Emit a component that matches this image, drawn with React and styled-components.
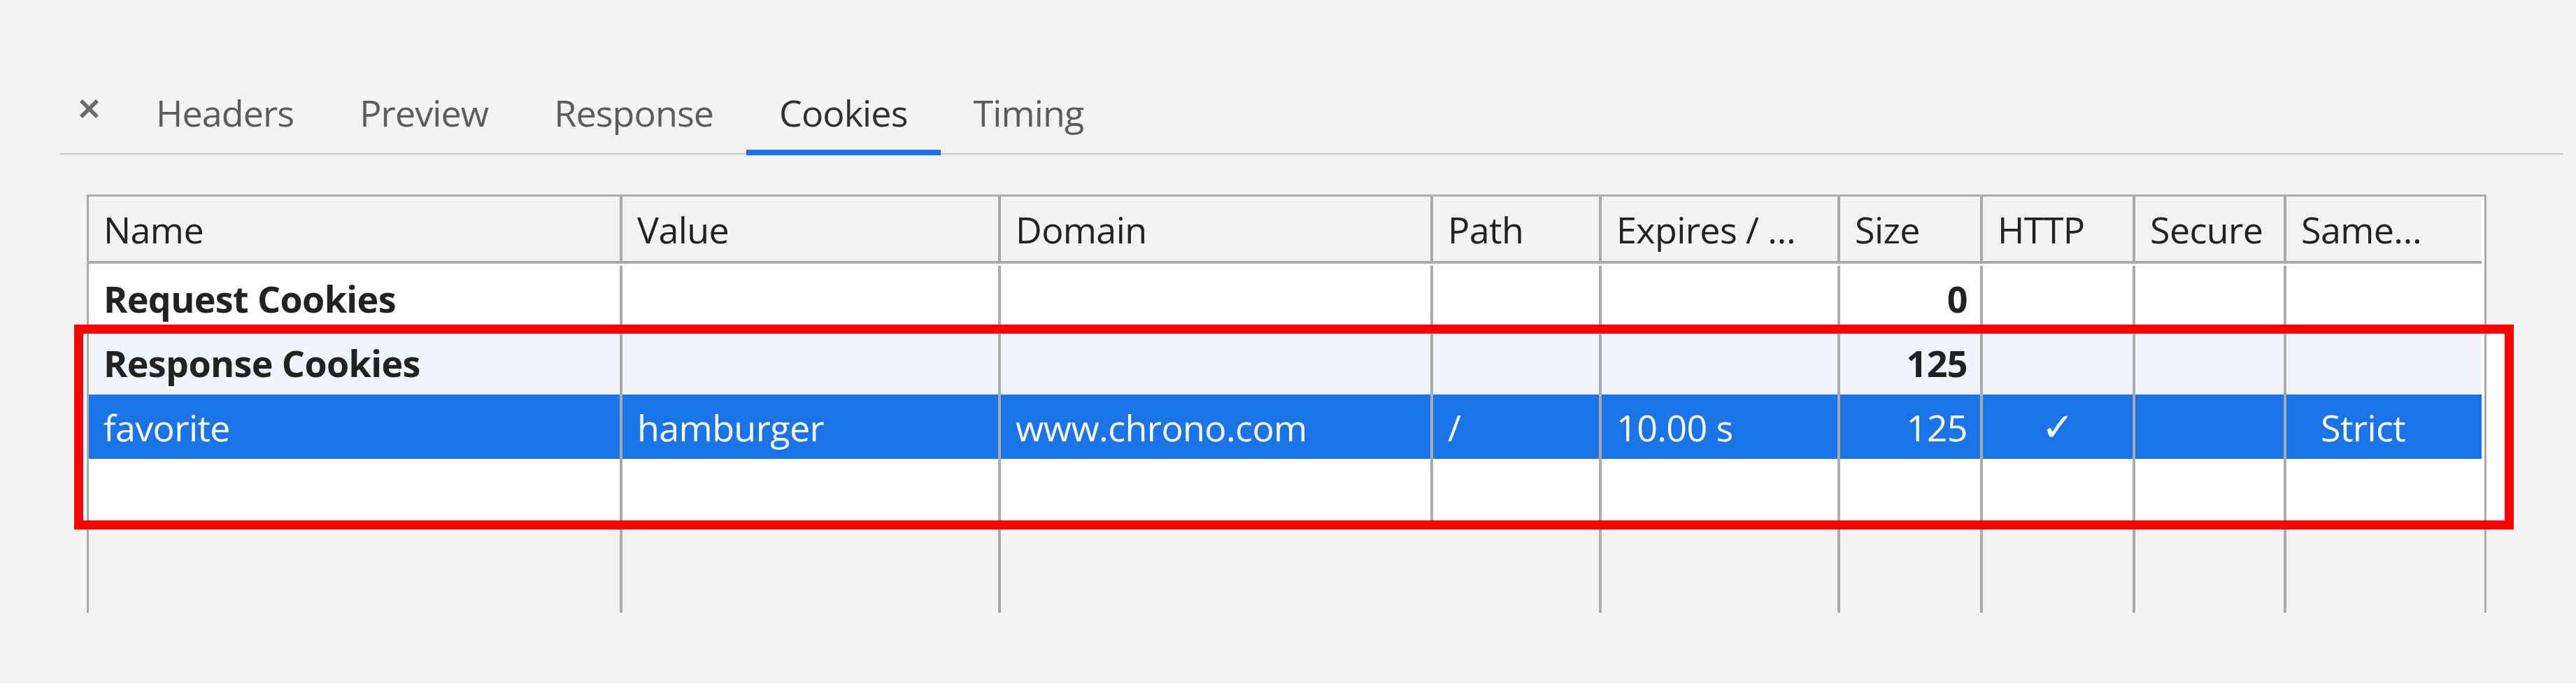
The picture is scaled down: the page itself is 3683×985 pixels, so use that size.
import React from "react";
import styled, { createGlobalStyle, css } from "styled-components";

const GlobalStyle = createGlobalStyle`
  html, body {
    margin: 0;
    padding: 0;
    background: #ffffff;
  }
  body {
    font-family: "Open Sans", "Noto Sans", sans-serif;
  }
  * { box-sizing: border-box; }
`;

const COLS = "759px 541px 618px 241px 341px 204px 218px 216px 283px";

const Page = styled.div`
  width: 100%;
  height: 977px;
  background: #f3f3f3;
  padding-top: 101px;
  overflow: hidden;
`;

const TabBar = styled.div`
  margin-left: 86px;
  width: 3579px;
  height: 120px;
  border-bottom: 2px solid #cbcbcb;
  display: flex;
  align-items: stretch;
  position: relative;
`;

const CloseButton = styled.div`
  margin-left: 26px;
  margin-right: 33px;
  width: 31px;
  align-self: center;
  height: 31px;
  margin-bottom: 10px;
  display: flex;
  align-items: center;
  justify-content: center;
`;

const Tab = styled.div`
  position: relative;
  display: flex;
  align-items: center;
  padding: 0 47px;
  font-size: 52px;
  letter-spacing: -0.9px;
  color: ${(p) => (p.$active ? "#303030" : "#5c5c5c")};
  ${(p) =>
    p.$active &&
    css`
      &::after {
        content: "";
        position: absolute;
        left: 0;
        right: 0;
        bottom: -3px;
        height: 8px;
        background: #1a73e8;
      }
    `}
`;

const TableWrap = styled.div`
  position: relative;
  margin-top: 57px;
  margin-left: 124px;
  width: 3431px;
`;

const Table = styled.div`
  position: relative;
  z-index: 1;
  border-top: 3px solid #aaaaaa;
  border-left: 3px solid #aaaaaa;
  border-right: 3px solid #aaaaaa;
  background: #f3f3f3;
  display: flex;
  flex-direction: column;
`;

const Sheet = styled.div`
  background: #ffffff;
  padding-right: 4px;
  display: flex;
  flex-direction: column;
`;

const rowBg = {
  header: "#f3f3f3",
  plain: "#ffffff",
  hover: "#f1f5fd",
  selected: "#1b73e8",
};

const Row = styled.div`
  display: grid;
  grid-template-columns: ${COLS};
  height: ${(p) => (p.$variant === "header" ? "96px" : "92px")};
  background: ${(p) => rowBg[p.$variant] || "#ffffff"};
  border-bottom: ${(p) => (p.$variant === "header" ? "4px solid #aaaaaa" : "none")};
  color: ${(p) => (p.$variant === "selected" ? "#ffffff" : "#222222")};
`;

const Body = styled.div`
  padding-top: 3px;
  display: flex;
  flex-direction: column;
`;

const Cell = styled.div`
  display: flex;
  align-items: center;
  justify-content: ${(p) =>
    p.$align === "right" ? "flex-end" : p.$align === "center" ? "center" : "flex-start"};
  padding: 0 ${(p) => (p.$align === "right" ? "18px" : "21px")} 0
    ${(p) => (p.$padLeft ? p.$padLeft : "21px")};
  border-left: ${(p) => (p.$first || p.$noLine ? "none" : "4px solid #aaaaaa")};
  font-size: 52px;
  letter-spacing: -0.6px;
  font-weight: ${(p) => (p.$bold ? 700 : 400)};
  white-space: nowrap;
  overflow: hidden;
`;

const Check = styled.span`
  font-family: "DejaVu Sans", sans-serif;
  font-size: 56px;
  font-weight: 400;
`;

const Filler = styled.div`
  display: grid;
  grid-template-columns: ${COLS};
  height: 128px;
`;

const FillerCell = styled.div`
  border-left: ${(p) => (p.$first || p.$noLine ? "none" : "4px solid #aaaaaa")};
`;

const HighlightBacking = styled.div`
  position: absolute;
  z-index: 0;
  left: -18px;
  top: 186px;
  width: 3488px;
  height: 293px;
  background: #ffffff;
`;

const HighlightFrame = styled.div`
  position: absolute;
  z-index: 2;
  left: -18px;
  top: 186px;
  width: 3488px;
  height: 293px;
  border: 13px solid #ff0000;
  pointer-events: none;
`;

const CloseIcon = () => (
  <svg width="31" height="31" viewBox="0 0 31 31">
    <path d="M4 4 L27 27 M27 4 L4 27" stroke="#6a6a6a" strokeWidth="5.5" />
  </svg>
);

const tabs = ["Headers", "Preview", "Response", "Cookies", "Timing"];

const headers = ["Name", "Value", "Domain", "Path", "Expires / …", "Size", "HTTP", "Secure", "Same…"];

const rows = [
  { variant: "plain", bold: true, cells: ["Request Cookies", "", "", "", "", "0", "", "", ""] },
  { variant: "hover", bold: true, cells: ["Response Cookies", "", "", "", "", "125", "", "", ""] },
  {
    variant: "selected",
    bold: false,
    cells: ["favorite", "hamburger", "www.chrono.com", "/", "10.00 s", "125", "✓", "", "Strict"],
  },
  { variant: "plain", bold: false, cells: ["", "", "", "", "", "", "", "", ""] },
];

const alignFor = (i) => (i === 5 ? "right" : i === 6 ? "center" : "left");

export default function App() {
  return (
    <>
      <GlobalStyle />
      <Page>
        <TabBar>
          <CloseButton>
            <CloseIcon />
          </CloseButton>
          {tabs.map((t) => (
            <Tab key={t} $active={t === "Cookies"}>
              {t}
            </Tab>
          ))}
        </TabBar>

        <TableWrap>
          <HighlightBacking />
          <Table>
            <Sheet>
              <Row $variant="header">
                {headers.map((h, i) => (
                  <Cell key={h} $first={i === 0}>
                    {h}
                  </Cell>
                ))}
              </Row>
              <Body>
                {rows.map((r, ri) => (
                  <Row key={ri} $variant={r.variant}>
                    {r.cells.map((c, i) => (
                      <Cell
                        key={i}
                        $first={i === 0}
                        $bold={r.bold}
                        $align={alignFor(i)}
                        $padLeft={i === 8 ? "49px" : undefined}
                      >
                        {c === "✓" ? <Check>{c}</Check> : c}
                      </Cell>
                    ))}
                  </Row>
                ))}
              </Body>
            </Sheet>
            <Filler>
              {headers.map((h, i) => (
                <FillerCell key={h} $first={i === 0} $noLine={i === 3} />
              ))}
            </Filler>
          </Table>
          <HighlightFrame />
        </TableWrap>
      </Page>
    </>
  );
}
